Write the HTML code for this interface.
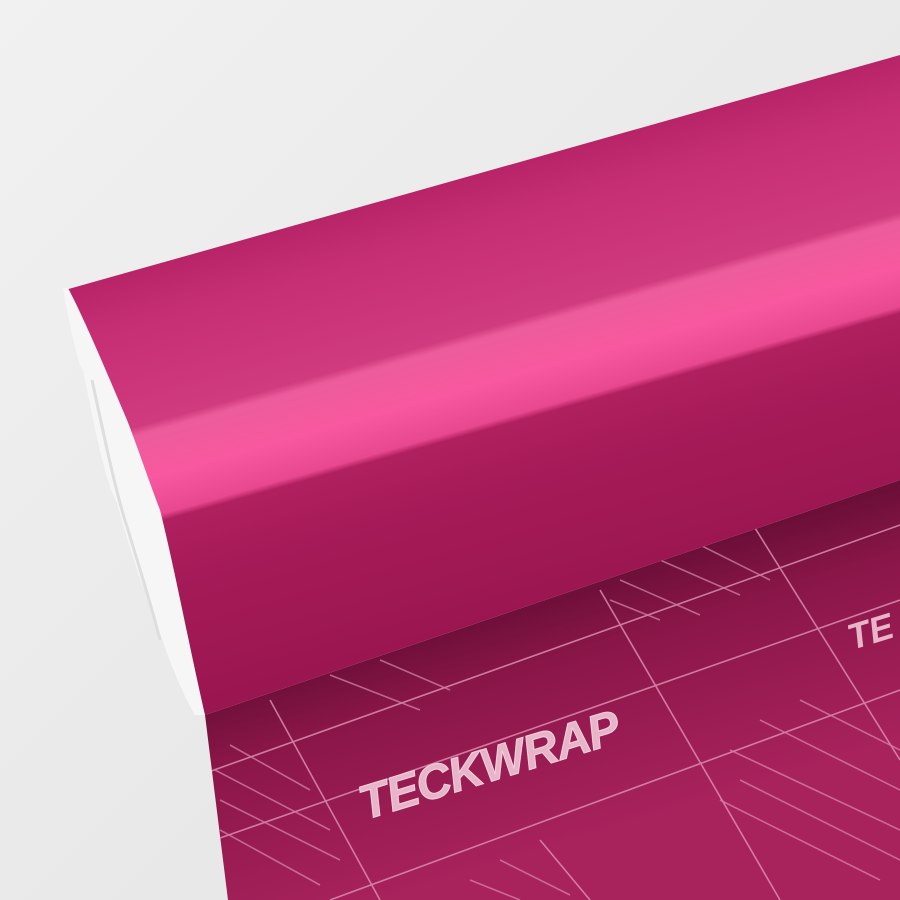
<!DOCTYPE html>
<html><head><meta charset="utf-8"><style>
html,body{margin:0;padding:0;width:900px;height:900px;overflow:hidden;background:#e9e9e9}
svg{display:block}
</style></head><body>
<svg width="900" height="900" viewBox="0 0 900 900" xmlns="http://www.w3.org/2000/svg">
<defs>
<linearGradient id="bg" x1="0" y1="0" x2="900" y2="900" gradientUnits="userSpaceOnUse">
<stop offset="0" stop-color="#f1f1f1"/><stop offset="1" stop-color="#e2e2e2"/></linearGradient>
<linearGradient id="roll" x1="300" y1="224" x2="420" y2="651" gradientUnits="userSpaceOnUse">
<stop offset="0" stop-color="#b82468"/>
<stop offset="0.12" stop-color="#c62f74"/>
<stop offset="0.34" stop-color="#d03a7e"/>
<stop offset="0.36" stop-color="#ec5c9c"/>
<stop offset="0.46" stop-color="#f8589f"/>
<stop offset="0.545" stop-color="#e84890"/>
<stop offset="0.56" stop-color="#b0205e"/>
<stop offset="0.7" stop-color="#a51a58"/>
<stop offset="1" stop-color="#9a1650"/>
</linearGradient>
<linearGradient id="sheet" x1="560" y1="560" x2="640" y2="820" gradientUnits="userSpaceOnUse">
<stop offset="0" stop-color="#5e0c30"/>
<stop offset="0.35" stop-color="#8a1648"/>
<stop offset="1" stop-color="#a8225c"/>
</linearGradient>
<clipPath id="sc"><polygon points="205,715 900,480 900,900 228,900"/></clipPath>
</defs>
<rect width="900" height="900" fill="url(#bg)"/>
<polygon points="205,715 900,480 900,900 228,900" fill="url(#sheet)"/>
<g clip-path="url(#sc)" stroke="#dc8cb0" stroke-width="1.6" fill="none" opacity="0.85">
<line x1="200" y1="775" x2="900" y2="525"/>
<line x1="200" y1="845" x2="900" y2="600"/>
<line x1="330" y1="900" x2="900" y2="690"/>
<line x1="270" y1="700" x2="380" y2="900"/>
<line x1="600" y1="590" x2="780" y2="900"/>
<line x1="750" y1="520" x2="900" y2="760"/>
<line x1="540" y1="840" x2="590" y2="900"/>
<g opacity="0.8">
<line x1="220" y1="800" x2="340" y2="860"/>
<line x1="220" y1="830" x2="320" y2="885"/>
<line x1="215" y1="770" x2="330" y2="830"/>
<line x1="230" y1="745" x2="310" y2="790"/>
<line x1="330" y1="675" x2="420" y2="710"/>
<line x1="380" y1="660" x2="450" y2="690"/>
<line x1="610" y1="600" x2="660" y2="620"/>
<line x1="620" y1="580" x2="700" y2="615"/>
<line x1="660" y1="560" x2="740" y2="595"/>
<line x1="700" y1="545" x2="770" y2="580"/>
<line x1="730" y1="750" x2="900" y2="830"/>
<line x1="740" y1="780" x2="900" y2="860"/>
<line x1="720" y1="800" x2="880" y2="880"/>
<line x1="760" y1="720" x2="900" y2="790"/>
<line x1="800" y1="700" x2="900" y2="750"/>
<line x1="470" y1="880" x2="520" y2="900"/>
<line x1="500" y1="860" x2="570" y2="895"/>
</g>
</g>
<g transform="translate(365,820) rotate(-17)" fill="#e8b4c9" stroke="#f3d3df" stroke-width="1">
<text x="0" y="0" font-family="Liberation Sans, sans-serif" font-weight="bold" font-style="italic" font-size="48" letter-spacing="-1">TECKWRAP</text>
</g>
<g transform="translate(852,650) rotate(-17)" fill="#e8b4c9">
<text x="0" y="0" font-family="Liberation Sans, sans-serif" font-weight="bold" font-style="italic" font-size="36">TE</text>
</g>
<polygon points="65,290 900,55 900,480 205,715" fill="url(#roll)"/>
<path d="M63,288 C70,330 80,370 83,370 C95,430 105,480 117,503 C130,550 140,580 150,603 C165,650 180,690 195,715 L205,715 C190,650 175,570 160,510 C145,470 135,440 127,420 C110,380 85,320 68,288 Z" fill="#f6f6f6"/>
<path d="M92,380 C105,440 115,490 128,530 C140,570 150,600 160,640" stroke="#dedede" stroke-width="3" fill="none"/>
</svg>
</body></html>
